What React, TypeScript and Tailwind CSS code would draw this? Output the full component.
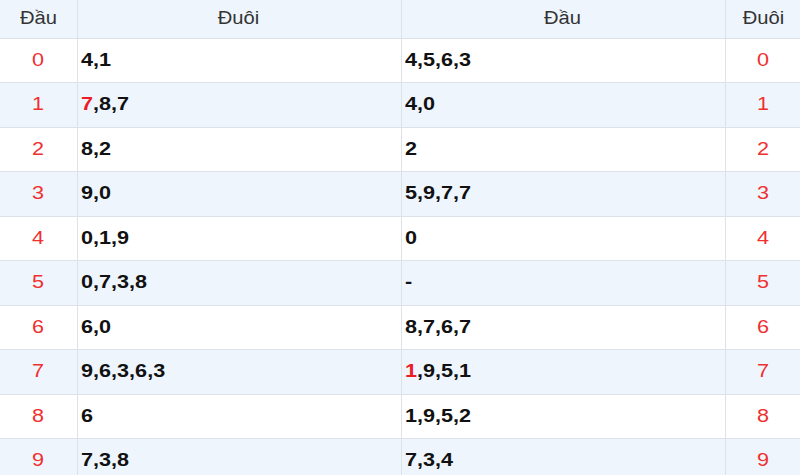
const rows: { n: number; tail: string; head: string; tailHot?: number; headHot?: number }[] = [
  { n: 0, tail: "4,1", head: "4,5,6,3" },
  { n: 1, tail: "7,8,7", head: "4,0", tailHot: 0 },
  { n: 2, tail: "8,2", head: "2" },
  { n: 3, tail: "9,0", head: "5,9,7,7" },
  { n: 4, tail: "0,1,9", head: "0" },
  { n: 5, tail: "0,7,3,8", head: "-" },
  { n: 6, tail: "6,0", head: "8,7,6,7" },
  { n: 7, tail: "9,6,3,6,3", head: "1,9,5,1", headHot: 0 },
  { n: 8, tail: "6", head: "1,9,5,2" },
  { n: 9, tail: "7,3,8", head: "7,3,4" },
]

// the glyphs in the shot are a bit wide, so stretch them horizontally
const Nums = ({ text, hot }: { text: string; hot?: number }) => {
  const parts = text.split(",")
  return (
    <span className="inline-block origin-left scale-x-[1.2]">
      {parts.map((p, i) => (
        <span key={i}>
          <span className={i === hot ? "text-[#ec1c24]" : ""}>{p}</span>
          {i < parts.length - 1 ? "," : ""}
        </span>
      ))}
    </span>
  )
}

const Head = ({ children }: { children: string }) => (
  <span className="inline-block scale-x-[1.12]">{children}</span>
)

export default function App() {
  return (
    <div className="w-[800px] h-[475px] overflow-hidden bg-white font-['Liberation_Sans',Arial,sans-serif]">
      <table className="w-[801px] table-fixed border-collapse">
        <colgroup>
          <col className="w-[77px]" />
          <col className="w-[324px]" />
          <col className="w-[324px]" />
          <col className="w-[76px]" />
        </colgroup>
        <thead>
          <tr className="h-[38px] bg-[#eef5fd] text-[18px] text-[#333]">
            <th className="font-normal border border-[#dde2e8] border-t-0 border-l-0"><Head>Đầu</Head></th>
            <th className="font-normal border border-[#dde2e8] border-t-0"><Head>Đuôi</Head></th>
            <th className="font-normal border border-[#dde2e8] border-t-0"><Head>Đầu</Head></th>
            <th className="font-normal border border-[#dde2e8] border-t-0 border-r-0"><Head>Đuôi</Head></th>
          </tr>
        </thead>
        <tbody>
          {rows.map((r) => (
            <tr key={r.n} className={`h-[44.5px] ${r.n % 2 ? "bg-[#eef5fd]" : "bg-white"}`}>
              <td className="border border-[#dde2e8] border-l-0 text-center text-[18px] text-[#f0302f]">
                <span className="inline-block scale-x-[1.2]">{r.n}</span>
              </td>
              <td className="border border-[#dde2e8] pl-[3px] text-[18px] font-bold text-[#111]">
                <Nums text={r.tail} hot={r.tailHot} />
              </td>
              <td className="border border-[#dde2e8] pl-[3px] text-[18px] font-bold text-[#111]">
                <Nums text={r.head} hot={r.headHot} />
              </td>
              <td className="border border-[#dde2e8] border-r-0 text-center text-[18px] text-[#f0302f]">
                <span className="inline-block scale-x-[1.2]">{r.n}</span>
              </td>
            </tr>
          ))}
        </tbody>
      </table>
    </div>
  )
}
